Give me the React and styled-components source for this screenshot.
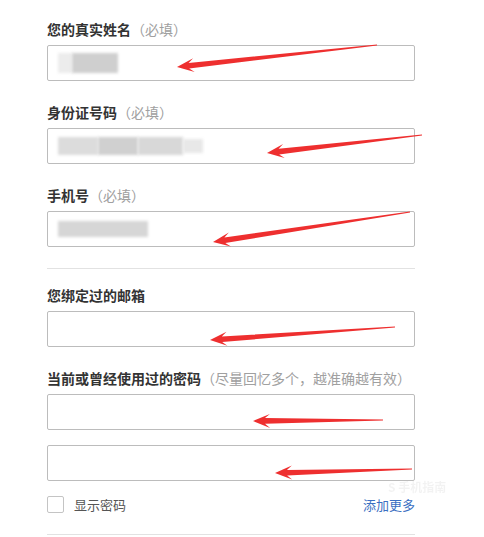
import React from 'react';
import styled, { createGlobalStyle } from 'styled-components';

const GlobalStyle = createGlobalStyle`
    html, body {
        margin: 0;
        padding: 0;
        background: #fff;
    }
    body {
        font-family: "Noto Sans CJK SC", "Noto Sans", sans-serif;
        color: #333;
    }
`;

// red annotation arrows drawn over the screenshot: [tailX, tailY, tipX, tipY]
const arrows = [
    [377, 45, 177, 67],
    [422, 135, 267, 153],
    [410, 212, 213, 242],
    [395, 327, 210, 340],
    [383, 420, 253, 421],
    [412, 469, 275, 473],
];

function arrowPoints([tx, ty, px, py]) {
    const len = Math.hypot(px - tx, py - ty);
    const dx = (px - tx) / len;
    const dy = (py - ty) / len;
    const nx = -dy;
    const ny = dx;
    const at = (back, side) => `${(px - dx * back + nx * side).toFixed(1)},${(py - dy * back + ny * side).toFixed(1)}`;
    return [
        `${(tx + nx * 0.4).toFixed(1)},${(ty + ny * 0.4).toFixed(1)}`,
        at(12, 2.8),
        at(17, 7),
        `${px},${py}`,
        at(17, -7),
        at(12, -2.8),
        `${(tx - nx * 0.4).toFixed(1)},${(ty - ny * 0.4).toFixed(1)}`,
    ].join(' ');
}

function Field({ label, hint, last, children }) {
    return (
        <Group $last={ last }>
            <Label>
                { label }
                { hint && <Hint>（{ hint }）</Hint> }
            </Label>
            { children }
        </Group>
    );
}

export default function App() {
    return (
        <Page>
            <GlobalStyle />
            <Form>
                <Field label={ '您的真实姓名' } hint={ '必填' }>
                    <Box>
                        <Blur $w={ 14 } $h={ 20 } $tone={ '#ececec' } />
                        <Blur $w={ 46 } $h={ 20 } $tone={ '#cfcfcf' } />
                    </Box>
                </Field>
                <Field label={ '身份证号码' } hint={ '必填' }>
                    <Box>
                        <Blur $w={ 40 } $h={ 18 } $tone={ '#dcdcdc' } />
                        <Blur $w={ 40 } $h={ 18 } $tone={ '#d0d0d0' } />
                        <Blur $w={ 45 } $h={ 18 } $tone={ '#d8d8d8' } />
                        <Blur $w={ 20 } $h={ 14 } $tone={ '#e8e8e8' } />
                    </Box>
                </Field>
                <Field label={ '手机号' } hint={ '必填' }>
                    <Box>
                        <Blur $w={ 90 } $h={ 16 } $tone={ '#d6d6d6' } />
                    </Box>
                </Field>

                <Divider />

                <Field label={ '您绑定过的邮箱' }>
                    <Box />
                </Field>
                <Field label={ '当前或曾经使用过的密码' } hint={ '尽量回忆多个，越准确越有效' } last>
                    <Box />
                    <Box />
                </Field>

                <Options>
                    <Check>
                        <span className={ 'box' } />
                        显示密码
                    </Check>
                    <More>添加更多</More>
                </Options>

                <Divider $bottom />
            </Form>

            <Watermark>S 手机指南</Watermark>

            <Overlay width={ 484 } height={ 537 } viewBox={ '0 0 484 537' }>
                { arrows.map((a, i) => (
                    <polygon key={ i } points={ arrowPoints(a) } fill={ '#ee2f2f' } />
                )) }
            </Overlay>
        </Page>
    );
}

const Page = styled.div`
    position: relative;
    width: 484px;
    height: 537px;
    overflow: hidden;
`;

const Form = styled.div`
    width: 368px;
    padding: 19px 0 0 47px;
`;

const Group = styled.div`
    display: flex;
    flex-direction: column;
    margin-bottom: ${ p => p.$last ? 13 : 21 }px;
`;

const Label = styled.div`
    font-size: 14px;
    line-height: 20px;
    font-weight: 700;
    color: #333;
    margin-bottom: 6px;
    white-space: nowrap;
`;

const Hint = styled.span`
    font-weight: 400;
    color: #a0a0a0;
`;

const Box = styled.div`
    box-sizing: border-box;
    height: 36px;
    border: 1px solid #bcbcbc;
    border-radius: 2px;
    display: flex;
    align-items: center;
    overflow: hidden;
    background: #fff;

    & + & {
        margin-top: 15px;
    }
`;

const Blur = styled.span`
    display: block;
    width: ${ p => p.$w }px;
    height: ${ p => p.$h }px;
    background: ${ p => p.$tone };
    filter: blur(1.5px);
    &:first-child {
        margin-left: 10px;
    }
`;

const Divider = styled.div`
    height: 1px;
    background: #e2e2e2;
    margin: ${ p => p.$bottom ? '20px 0 0' : '1px 0 16px' };
`;

const Options = styled.div`
    display: flex;
    align-items: center;
    justify-content: space-between;
    height: 20px;
    font-size: 13px;
`;

const Check = styled.label`
    display: flex;
    align-items: center;
    gap: 10px;
    color: #555;

    .box {
        width: 15px;
        height: 15px;
        border: 1px solid #c4c4c4;
        border-radius: 2px;
    }
`;

const More = styled.a`
    color: #3b6fc2;
    cursor: pointer;
`;

const Watermark = styled.div`
    position: absolute;
    left: 388px;
    top: 481px;
    font-size: 12px;
    line-height: 12px;
    font-weight: 700;
    color: rgba(0, 0, 0, 0.05);
    filter: blur(0.6px);
`;

const Overlay = styled.svg`
    position: absolute;
    left: 0;
    top: 0;
    pointer-events: none;
`;
